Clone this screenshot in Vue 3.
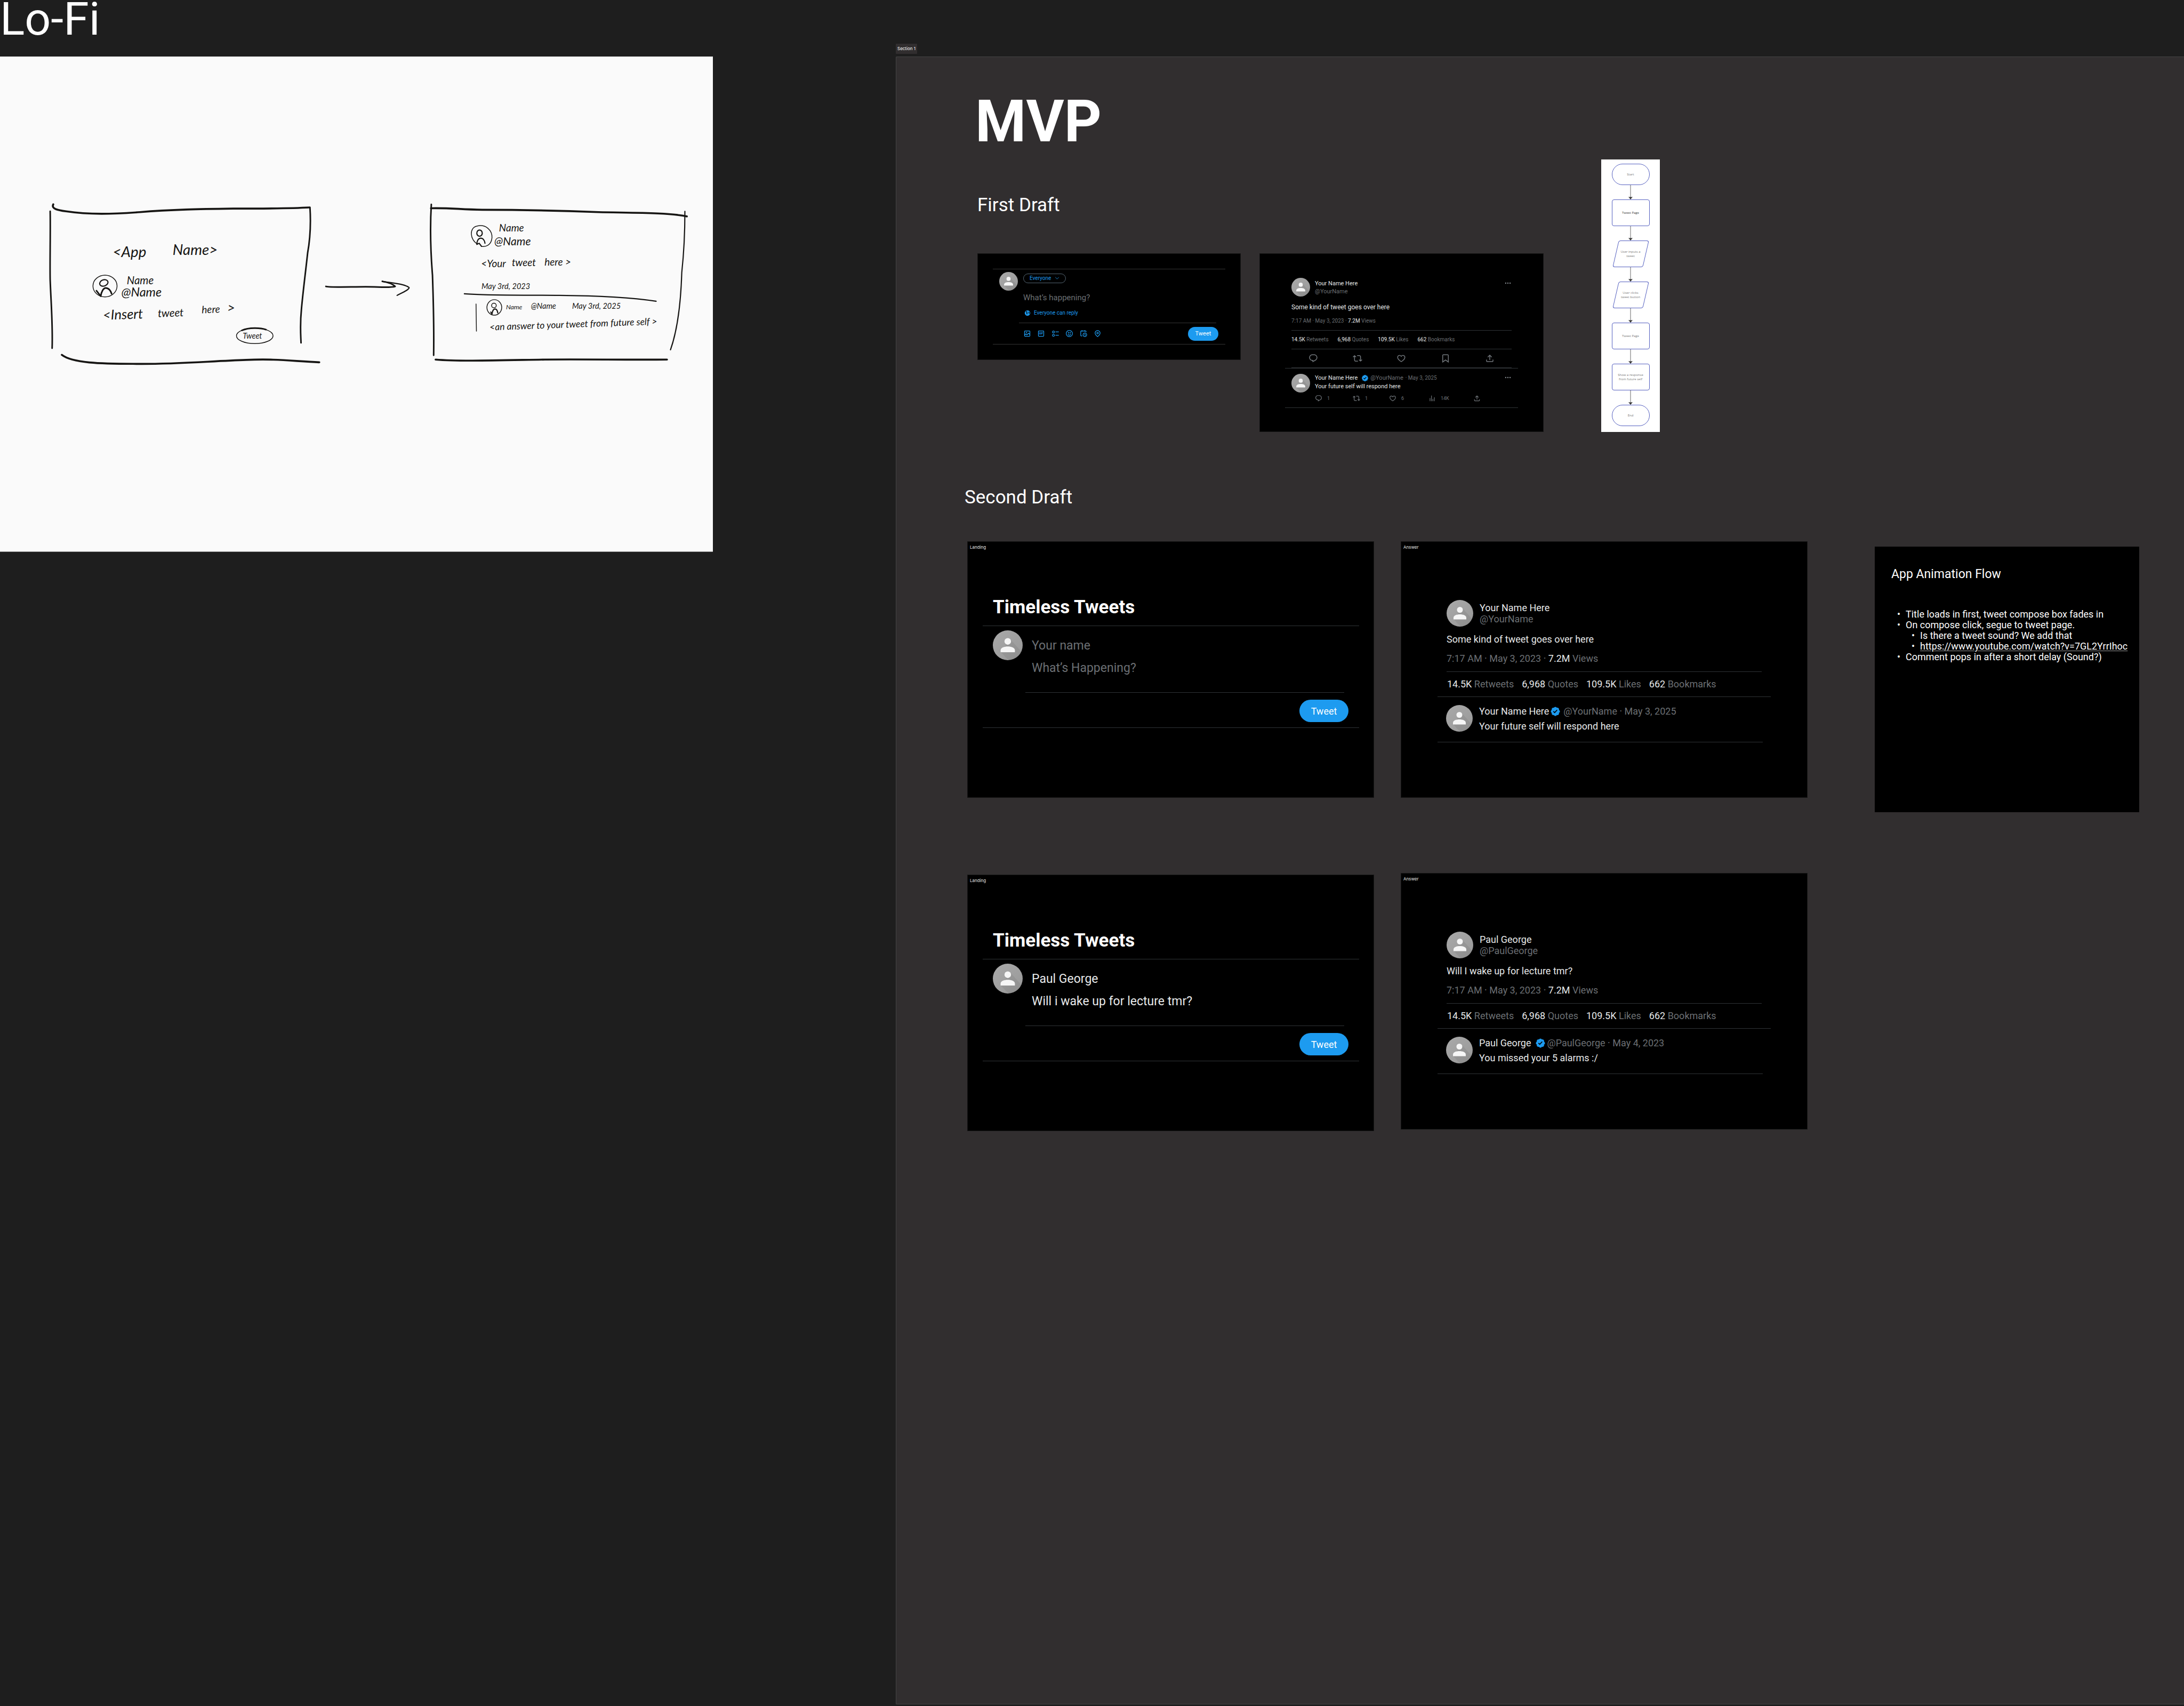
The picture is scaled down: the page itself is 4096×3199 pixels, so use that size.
<script setup>
const icons = {
  reply: 'M1.751 10c0-4.42 3.584-8 8.005-8h4.366c4.49 0 8.129 3.64 8.129 8.13 0 2.96-1.607 5.68-4.196 7.11l-8.054 4.46v-3.69h-.067c-4.49.1-8.183-3.51-8.183-8.01zm8.005-6c-3.317 0-6.005 2.69-6.005 6 0 3.37 2.77 6.08 6.138 6.01l.351-.01h1.761v2.3l5.087-2.81c1.951-1.08 3.163-3.13 3.163-5.36 0-3.39-2.744-6.13-6.129-6.13H9.756z',
  retweet: 'M4.5 3.88l4.432 4.14-1.364 1.46L5.5 7.55V16c0 1.1.896 2 2 2H13v2H7.5c-2.209 0-4-1.79-4-4V7.55L1.432 9.48.068 8.02 4.5 3.88zM16.5 6H11V4h5.5c2.209 0 4 1.79 4 4v8.45l2.068-1.93 1.364 1.46-4.432 4.14-4.432-4.14 1.364-1.46 2.068 1.93V8c0-1.1-.896-2-2-2z',
  like: 'M16.697 5.5c-1.222-.06-2.679.51-3.89 2.16l-.805 1.09-.806-1.09C9.984 6.01 8.526 5.44 7.304 5.5c-1.243.07-2.349.78-2.91 1.91-.552 1.12-.633 2.78.479 4.82 1.074 1.97 3.257 4.27 7.129 6.61 3.87-2.34 6.052-4.64 7.126-6.61 1.111-2.04 1.03-3.7.477-4.82-.561-1.13-1.666-1.84-2.908-1.91zm4.187 7.69c-1.351 2.48-4.001 5.12-8.379 7.67l-.503.3-.504-.3c-4.379-2.55-7.029-5.19-8.382-7.67-1.36-2.5-1.41-4.86-.514-6.67.887-1.79 2.647-2.91 4.601-3.01 1.651-.09 3.368.56 4.798 2.01 1.429-1.45 3.146-2.1 4.796-2.01 1.954.1 3.714 1.22 4.601 3.01.896 1.81.846 4.17-.514 6.67z',
  bookmark: 'M4 4.5C4 3.12 5.119 2 6.5 2h11C18.881 2 20 3.12 20 4.5v18.44l-8-5.71-8 5.71V4.5zM6.5 4c-.276 0-.5.22-.5.5v14.56l6-4.29 6 4.29V4.5c0-.28-.224-.5-.5-.5h-11z',
  share: 'M12 2.59l5.7 5.7-1.41 1.42L13 6.41V16h-2V6.41l-3.3 3.3-1.41-1.42L12 2.59zM21 15l-.02 3.51c0 1.38-1.12 2.49-2.5 2.49H5.5C4.11 21 3 19.88 3 18.5V15h2v3.5c0 .28.22.5.5.5h12.98c.28 0 .5-.22.5-.5L19 15h2z',
  views: 'M8.75 21V3h2v18h-2zM18 21V8.5h2V21h-2zM4 21l.004-10h2L6 21H4zm9.248 0v-7h2v7h-2z',
  more: 'M3 12c0-1.1.9-2 2-2s2 .9 2 2-.9 2-2 2-2-.9-2-2zm9 2c1.1 0 2-.9 2-2s-.9-2-2-2-2 .9-2 2 .9 2 2 2zm7 0c1.1 0 2-.9 2-2s-.9-2-2-2-2 .9-2 2 .9 2 2 2z',
  media: 'M3 5.5C3 4.119 4.119 3 5.5 3h13C19.881 3 21 4.119 21 5.5v13c0 1.381-1.119 2.5-2.5 2.5h-13C4.119 21 3 19.881 3 18.5v-13zM5.5 5c-.276 0-.5.224-.5.5v9.086l3-3 3 3 5-5 3 3V5.5c0-.276-.224-.5-.5-.5h-13zM19 15.414l-3-3-5 5-3-3-3 3V18.5c0 .276.224.5.5.5h13c.276 0 .5-.224.5-.5v-3.086zM9.75 7C8.784 7 8 7.784 8 8.75s.784 1.75 1.75 1.75 1.75-.784 1.75-1.75S10.716 7 9.75 7z',
  gif: 'M3 5.5C3 4.119 4.119 3 5.5 3h13C19.881 3 21 4.119 21 5.5v13c0 1.381-1.119 2.5-2.5 2.5h-13C4.119 21 3 19.881 3 18.5v-13zM5.5 5c-.276 0-.5.224-.5.5v13c0 .276.224.5.5.5h13c.276 0 .5-.224.5-.5v-13c0-.276-.224-.5-.5-.5h-13z',
  poll: 'M6 5c-1.1 0-2 .895-2 2s.9 2 2 2 2-.895 2-2-.9-2-2-2zM2 7c0-2.209 1.79-4 4-4s4 1.791 4 4-1.79 4-4 4-4-1.791-4-4zm20 1H12V6h10v2zM6 15c-1.1 0-2 .895-2 2s.9 2 2 2 2-.895 2-2-.9-2-2-2zm-4 2c0-2.209 1.79-4 4-4s4 1.791 4 4-1.79 4-4 4-4-1.791-4-4zm20 1H12v-2h10v2z',
  emoji: 'M8 9.5C8 8.119 8.672 7 9.5 7S11 8.119 11 9.5 10.328 12 9.5 12 8 10.881 8 9.5zm6.5 2.5c.828 0 1.5-1.119 1.5-2.5S15.328 7 14.5 7 13 8.119 13 9.5s.672 2.5 1.5 2.5zM12 16c-2.224 0-3.021-2.227-3.051-2.316l-1.897.633c.05.15 1.271 3.684 4.949 3.684s4.898-3.533 4.949-3.684l-1.896-.638c-.033.095-.83 2.322-3.053 2.322zm10.25-4.001c0 5.652-4.598 10.25-10.25 10.25S1.75 17.652 1.75 12 6.348 1.75 12 1.75 22.25 6.348 22.25 12zm-2 0c0-4.549-3.701-8.25-8.25-8.25S3.75 7.451 3.75 12s3.701 8.25 8.25 8.25 8.25-3.701 8.25-8.25z',
  schedule: 'M6 3V2h2v1h6V2h2v1h1.5C18.88 3 20 4.119 20 5.5v2h-2v-2c0-.276-.22-.5-.5-.5H16v1h-2V5H8v1H6V5H4.5c-.28 0-.5.224-.5.5v12c0 .276.22.5.5.5h3v2h-3C3.12 20 2 18.881 2 17.5v-12C2 4.119 3.12 3 4.5 3H6zm9.5 8c-2.49 0-4.5 2.015-4.5 4.5s2.01 4.5 4.5 4.5 4.5-2.015 4.5-4.5-2.01-4.5-4.5-4.5zM9 15.5C9 11.91 11.91 9 15.5 9s6.5 2.91 6.5 6.5-2.91 6.5-6.5 6.5S9 19.09 9 15.5zm5.5-2.5h2v2.086l1.71 1.707-1.42 1.414-2.29-2.293V13z',
  location: 'M12 7c-1.93 0-3.5 1.57-3.5 3.5S10.07 14 12 14s3.5-1.57 3.5-3.5S13.93 7 12 7zm0 5c-.827 0-1.5-.673-1.5-1.5S11.173 9 12 9s1.5.673 1.5 1.5S12.827 12 12 12zm0-10c-4.687 0-8.5 3.813-8.5 8.5 0 5.967 7.621 11.116 7.945 11.332l.555.37.555-.37c.324-.216 7.945-5.365 7.945-11.332C20.5 5.813 16.687 2 12 2zm0 17.77c-1.665-1.241-6.5-5.196-6.5-9.27C5.5 6.916 8.416 4 12 4s6.5 2.916 6.5 6.5c0 4.073-4.835 8.028-6.5 9.27z',
  globe: 'M12 1.75C6.34 1.75 1.75 6.34 1.75 12S6.34 22.25 12 22.25 22.25 17.66 22.25 12 17.66 1.75 12 1.75zm-.25 10.48L10.5 17.5l-2-1.5v-3.5L7.5 9 5.03 7.59c1.42-2.24 3.89-3.75 6.72-3.84L11 6l-2 .5L8.5 9l5 1.5-1.75 1.73zM17 14v-3l-1.5-3 2.88-1.23c1.17 1.42 1.87 3.24 1.87 5.23 0 1.3-.3 2.52-.83 3.61L17 14z',
  verified: 'M22.25 12c0-1.43-.88-2.67-2.19-3.34.46-1.39.2-2.9-.81-3.91s-2.52-1.27-3.91-.81c-.66-1.31-1.91-2.19-3.34-2.19s-2.67.88-3.33 2.19c-1.4-.46-2.91-.2-3.92.81s-1.26 2.52-.8 3.91c-1.31.67-2.2 1.91-2.2 3.34s.89 2.67 2.2 3.34c-.46 1.39-.21 2.9.8 3.91s2.52 1.26 3.91.81c.67 1.31 1.91 2.19 3.34 2.19s2.68-.88 3.34-2.19c1.39.45 2.9.2 3.91-.81s1.27-2.52.81-3.91c1.31-.67 2.19-1.91 2.19-3.34zm-11.71 4.2L6.8 12.46l1.41-1.42 2.26 2.26 4.8-5.23 1.47 1.36-6.2 6.77z'
}

const tools = [
  { icon: 'media', label: 'Media' },
  { icon: 'gif', label: 'GIF' },
  { icon: 'poll', label: 'Poll' },
  { icon: 'emoji', label: 'Emoji' },
  { icon: 'schedule', label: 'Schedule' },
  { icon: 'location', label: 'Location' }
]

const actions = [
  { icon: 'reply', label: 'Reply' },
  { icon: 'retweet', label: 'Retweet' },
  { icon: 'like', label: 'Like' },
  { icon: 'bookmark', label: 'Bookmark' },
  { icon: 'share', label: 'Share' }
]

const replyActions = [
  { icon: 'reply', label: 'Reply', count: '1' },
  { icon: 'retweet', label: 'Retweet', count: '1' },
  { icon: 'like', label: 'Like', count: '6' },
  { icon: 'views', label: 'Views', count: '14K' },
  { icon: 'share', label: 'Share', count: '' }
]

const stats = [
  { value: '14.5K', label: 'Retweets' },
  { value: '6,968', label: 'Quotes' },
  { value: '109.5K', label: 'Likes' },
  { value: '662', label: 'Bookmarks' }
]

const landings = [
  { id: 'empty', name: '', text: '' },
  { id: 'filled', name: 'Paul George', text: 'Will i wake up for lecture tmr?' }
]

const answers = [
  {
    id: 'empty',
    name: 'Your Name Here',
    handle: '@YourName',
    text: 'Some kind of tweet goes over here',
    replyDate: 'May 3, 2025',
    reply: 'Your future self will respond here'
  },
  {
    id: 'filled',
    name: 'Paul George',
    handle: '@PaulGeorge',
    text: 'Will I wake up for lecture tmr?',
    replyDate: 'May 4, 2023',
    reply: 'You missed your 5 alarms :/'
  }
]

const flow = [
  { shape: 'terminal', lines: ['Start'] },
  { shape: 'process', lines: ['Tweet Page'], strong: true },
  { shape: 'data', lines: ['User inputs a', 'tweet'] },
  { shape: 'data', lines: ['User clicks', 'tweet button'] },
  { shape: 'process', lines: ['Tweet Page'] },
  { shape: 'process', lines: ['Show a response', 'from future self'] },
  { shape: 'terminal', lines: ['End'] }
]
</script>

<template>
  <main class="canvas">
    <svg class="defs" aria-hidden="true">
      <defs>
        <linearGradient id="avatar-fill" x1="0" y1="0" x2="1" y2="1">
          <stop offset="0" stop-color="#a9a9a9" />
          <stop offset="1" stop-color="#989898" />
        </linearGradient>
        <clipPath id="avatar-clip"><circle cx="50" cy="50" r="50" /></clipPath>
        <symbol id="avatar" viewBox="0 0 100 100">
          <circle cx="50" cy="50" r="50" fill="url(#avatar-fill)" />
          <path d="M58 29 L100 76 V100 H52 L27 73 Z" fill="#000" opacity=".06" clip-path="url(#avatar-clip)" />
          <circle cx="50" cy="37" r="11" fill="#f6f6f6" />
          <path d="M26 73V67C26 58 38 54 50 54S74 58 74 67V73Z" fill="#f6f6f6" />
        </symbol>
      </defs>
    </svg>

    <section class="lofi">
      <h1 class="lofi-title">Lo-Fi</h1>
      <svg class="sketch" viewBox="0 0 1833 1273" role="img" aria-label="Hand-drawn wireframe">
        <rect width="1833" height="1273" fill="#fafafa" />
        <g class="ink">
          <path d="M137 380C131 392 150 395 170 398C230 407 290 405 360 400C440 393 520 392 600 391C680 391 740 391 796 388" stroke-width="5" />
          <path d="M129 398C130 450 128 530 129 575C131 630 136 690 134 750" stroke-width="4" />
          <path d="M797 388C799 420 799 460 791 505C785 560 779 605 775 650C771 690 773 710 774 736" stroke-width="4" />
          <path d="M159 767C185 788 260 790 342 790C440 792 540 783 633 780C710 776 760 784 821 786" stroke-width="5" />
          <ellipse cx="270" cy="590" rx="31" ry="28" stroke-width="2" />
          <ellipse cx="267" cy="582" rx="11" ry="8" stroke-width="3" transform="rotate(-20 267 582)" />
          <path d="M248 602L259 616C261 604 266 595 272 595C279 595 285 602 287 610" stroke-width="4" />
          <ellipse cx="655" cy="718" rx="47" ry="20" stroke-width="2" />
          <path d="M622 704C640 696 670 697 684 702" stroke-width="4" />
          <path d="M838 591C850 594 900 592 940 592C975 592 1005 595 1016 591C1008 583 996 580 983 578" stroke-width="4" />
          <path d="M983 578C1005 582 1040 584 1052 594C1052 600 1032 608 1021 614" stroke-width="3" />
          <path d="M1109 380C1106 430 1107 500 1112 562C1114 620 1116 700 1115 768" stroke-width="4" />
          <path d="M1108 390C1160 389 1180 393 1240 394C1340 394 1460 397 1539 400C1620 402 1720 401 1766 411" stroke-width="5" />
          <path d="M1761 398C1761 450 1759 500 1753 555C1751 620 1743 700 1724 754" stroke-width="3" />
          <path d="M1120 779C1180 784 1280 781 1401 779C1500 778 1620 780 1715 779" stroke-width="5" />
          <path d="M1228 482C1208 472 1206 440 1226 436C1250 430 1266 448 1265 466C1263 486 1248 490 1238 488" stroke-width="2" />
          <ellipse cx="1233" cy="454" rx="7" ry="8" stroke-width="3" />
          <path d="M1226 483C1226 474 1230 467 1236 467C1242 467 1246 473 1247 480M1226 483L1232 480L1238 488" stroke-width="3" />
          <path d="M1194 610C1250 615 1360 613 1438 614C1540 615 1620 619 1687 629" stroke-width="3" />
          <path d="M1224 636L1225 706" stroke-width="2" />
          <ellipse cx="1271" cy="645" rx="19" ry="20" stroke-width="2" />
          <ellipse cx="1270" cy="640" rx="6" ry="6" stroke-width="2" />
          <path d="M1262 657L1265 662C1266 655 1269 649 1273 649C1277 649 1279 654 1280 659" stroke-width="3" />
        </g>
        <g class="scrawl">
          <text x="290" y="516" font-size="38">&lt;App</text>
          <text x="444" y="510" font-size="38">Name&gt;</text>
          <text x="326" y="586" font-size="28">Name</text>
          <text x="312" y="617" font-size="32">@Name</text>
          <text x="265" y="677" font-size="35" transform="rotate(-2 265 677)">&lt;Insert</text>
          <text x="406" y="670" font-size="28" transform="rotate(-2 406 670)">tweet</text>
          <text x="519" y="660" font-size="26" transform="rotate(-2 519 660)">here</text>
          <text x="584" y="658" font-size="35">&gt;</text>
          <text x="624" y="725" font-size="20">Tweet</text>
          <text x="1283" y="449" font-size="26">Name</text>
          <text x="1271" y="485" font-size="29">@Name</text>
          <text x="1237" y="541" font-size="26">&lt;Your</text>
          <text x="1316" y="539" font-size="26">tweet</text>
          <text x="1400" y="538" font-size="26">here &gt;</text>
          <text x="1238" y="598" font-size="20">May 3rd, 2023</text>
          <text x="1301" y="650" font-size="17">Name</text>
          <text x="1365" y="648" font-size="20">@Name</text>
          <text x="1471" y="649" font-size="20">May 3rd, 2025</text>
          <text x="1259" y="704" font-size="24" transform="rotate(-2 1259 704)">&lt;an answer to your tweet from future self &gt;</text>
        </g>
      </svg>
    </section>

    <div class="board">
      <p class="section-tag">Section 1</p>
      <section class="section">
        <div class="first">
          <div class="first-main">
            <h1 class="mvp">MVP</h1>
            <h2 class="draft-title">First Draft</h2>
            <div class="first-frames">
              <article class="frame compose">
                <div class="compose-box">
                  <div class="compose-body">
                    <svg class="avatar-sm"><use href="#avatar" /></svg>
                    <div class="compose-fields">
                      <div class="audience">
                        <select aria-label="Audience"><option>Everyone</option></select>
                        <svg class="chevron" viewBox="0 0 10 6"><path d="M1 1L5 5L9 1" /></svg>
                      </div>
                      <input class="compose-input" type="text" aria-label="Tweet text" placeholder="What’s happening?" />
                      <p class="who">
                        <svg viewBox="0 0 24 24"><path :d="icons.globe" /></svg>
                        Everyone can reply
                      </p>
                    </div>
                  </div>
                  <div class="compose-tools">
                    <div class="tool-list">
                      <button v-for="t in tools" :key="t.icon" class="tool" type="button" :aria-label="t.label">
                        <svg viewBox="0 0 24 24">
                          <path :d="icons[t.icon]" />
                          <text v-if="t.icon === 'gif'" x="12" y="15" text-anchor="middle">GIF</text>
                        </svg>
                      </button>
                    </div>
                    <button class="tweet-btn tweet-btn-sm" type="button">Tweet</button>
                  </div>
                </div>
              </article>

              <article class="frame thread">
                <div class="thread-main">
                  <header class="author">
                    <svg class="avatar-sm"><use href="#avatar" /></svg>
                    <div class="names">
                      <p class="name">Your Name Here</p>
                      <p class="handle">@YourName</p>
                    </div>
                    <button class="more" type="button" aria-label="More"><svg viewBox="0 0 24 24"><path :d="icons.more" /></svg></button>
                  </header>
                  <p class="thread-text">Some kind of tweet goes over here</p>
                  <p class="thread-meta">7:17 AM · May 3, 2023 · <b>7.2M</b> Views</p>
                  <ul class="thread-stats">
                    <li v-for="s in stats" :key="s.label"><b>{{ s.value }}</b> {{ s.label }}</li>
                  </ul>
                  <div class="thread-actions">
                    <button v-for="a in actions" :key="a.icon" type="button" :aria-label="a.label">
                      <svg viewBox="0 0 24 24"><path :d="icons[a.icon]" /></svg>
                    </button>
                  </div>
                </div>
                <div class="thread-reply">
                  <svg class="avatar-sm"><use href="#avatar" /></svg>
                  <div class="reply-body">
                    <div class="reply-head">
                      <span class="name">Your Name Here</span>
                      <svg class="badge-sm" viewBox="0 0 24 24"><path :d="icons.verified" /></svg>
                      <span class="handle">@YourName</span>
                      <span class="date">· May 3, 2025</span>
                      <button class="more" type="button" aria-label="More"><svg viewBox="0 0 24 24"><path :d="icons.more" /></svg></button>
                    </div>
                    <p class="reply-text">Your future self will respond here</p>
                    <div class="reply-actions">
                      <button v-for="a in replyActions" :key="a.icon" type="button" :aria-label="a.label">
                        <svg viewBox="0 0 24 24"><path :d="icons[a.icon]" /></svg>
                        <span v-if="a.count">{{ a.count }}</span>
                      </button>
                    </div>
                  </div>
                </div>
              </article>
            </div>
          </div>

          <ol class="flow">
            <li v-for="(n, i) in flow" :key="i">
              <svg v-if="i > 0" class="arrow" viewBox="0 0 8 27"><path d="M4 0V24" stroke="#666" fill="none" /><path d="M0 22Q4 23 8 22L4 27Z" fill="#333" /></svg>
              <div class="node" :class="[n.shape, { strong: n.strong }]">
                <span v-for="line in n.lines" :key="line">{{ line }}</span>
              </div>
            </li>
          </ol>
        </div>

        <h2 class="draft-title second-title">Second Draft</h2>
        <div class="second">
          <div class="column">
            <article v-for="l in landings" :key="l.id" class="frame">
              <p class="frame-tag">Landing</p>
              <h3 class="landing-title">Timeless Tweets</h3>
              <form class="landing-box" @submit.prevent>
                <div class="landing-body">
                  <svg class="avatar-lg"><use href="#avatar" /></svg>
                  <div class="landing-fields">
                    <input type="text" aria-label="Your name" placeholder="Your name" :value="l.name" />
                    <input type="text" aria-label="Tweet text" placeholder="What’s Happening?" :value="l.text" />
                  </div>
                </div>
                <div class="landing-foot">
                  <button class="tweet-btn tweet-btn-lg" type="submit">Tweet</button>
                </div>
              </form>
            </article>
          </div>

          <div class="column column-answers">
            <article v-for="a in answers" :key="a.id" class="frame">
              <p class="frame-tag">Answer</p>
              <div class="answer-main">
                <header class="answer-author">
                  <svg class="avatar-md"><use href="#avatar" /></svg>
                  <div>
                    <p class="name">{{ a.name }}</p>
                    <p class="handle">{{ a.handle }}</p>
                  </div>
                </header>
                <p class="answer-text">{{ a.text }}</p>
                <p class="answer-meta">7:17 AM · May 3, 2023 · <b>7.2M</b> Views</p>
              </div>
              <ul class="answer-stats">
                <li v-for="s in stats" :key="s.label"><b>{{ s.value }}</b> {{ s.label }}</li>
              </ul>
              <div class="answer-reply">
                <svg class="avatar-md"><use href="#avatar" /></svg>
                <div>
                  <div class="answer-head" :class="a.id">
                    <span class="name">{{ a.name }}</span>
                    <svg class="badge" viewBox="0 0 24 24"><path :d="icons.verified" /></svg>
                    <span class="handle">{{ a.handle }} · {{ a.replyDate }}</span>
                  </div>
                  <p class="answer-text">{{ a.reply }}</p>
                </div>
              </div>
            </article>
          </div>

          <aside class="notes">
            <h3>App Animation Flow</h3>
            <ul>
              <li>Title loads in first, tweet compose box fades in</li>
              <li>
                On compose click, segue to tweet page.
                <ul>
                  <li>Is there a tweet sound? We add that</li>
                  <li><a href="https://www.youtube.com/watch?v=7GL2YrrIhoc">https://www.youtube.com/watch?v=7GL2YrrIhoc</a></li>
                </ul>
              </li>
              <li>Comment pops in after a short delay (Sound?)</li>
            </ul>
          </aside>
        </div>
      </section>
    </div>
  </main>
</template>

<style>
body {
  margin: 0;
  background: #1e1e1e;
}
</style>

<style scoped>
* {
  box-sizing: border-box;
}

h1,
h2,
h3,
p,
ul,
ol {
  margin: 0;
  padding: 0;
}

ul,
ol {
  list-style: none;
}

button,
input,
select {
  margin: 0;
  padding: 0;
  border: 0;
  background: none;
  color: inherit;
  font: inherit;
  outline: none;
}

svg {
  display: block;
  flex: none;
}

b {
  color: #e7e9ea;
  font-weight: 400;
}

.canvas {
  display: grid;
  grid-template-columns: 1337fr 2416fr;
  column-gap: 343px;
  min-height: 100vh;
  background: #1e1e1e;
  color: #fff;
  font-family: Roboto, "Liberation Sans", sans-serif;
}

.defs {
  position: absolute;
  width: 0;
  height: 0;
}

/* Lo-Fi sketch */
.lofi-title {
  padding-bottom: 34px;
  font-size: 86px;
  line-height: 72px;
  font-weight: 400;
}

.sketch {
  width: 100%;
  height: auto;
}

.ink {
  fill: none;
  stroke: #161513;
  stroke-linecap: round;
  stroke-linejoin: round;
}

.scrawl {
  fill: #161513;
  font-family: Lato, sans-serif;
  font-style: italic;
}

/* Board */
.board {
  display: flex;
  flex-direction: column;
  padding: 82px 0 3px;
}

.section-tag {
  align-self: flex-start;
  margin-bottom: 5px;
  padding: 0 3px;
  border-radius: 1px;
  background: #312e2f;
  font: 8px/19px Inter, sans-serif;
}

.section {
  flex: 1;
  padding-top: 57px;
  border: 1px solid #444;
  border-right: 0;
  border-radius: 2px 0 0 2px;
  background: #312e2f;
}

.first {
  display: flex;
  align-items: flex-end;
  gap: 108px;
  padding-left: 152px;
}

.mvp {
  margin-left: -4px;
  font-size: 109px;
  line-height: 128px;
  font-weight: 700;
}

.draft-title {
  margin-top: 72px;
  font-size: 35px;
  line-height: 42px;
  font-weight: 400;
}

.first-frames {
  display: flex;
  align-items: flex-start;
  gap: 35px;
  margin-top: 69px;
}

.frame {
  background: #000;
  box-shadow: inset 0 0 0 1px #161616;
}

.name {
  color: #e7e9ea;
}

.handle,
.date {
  color: #6b6f73;
}

.avatar-sm {
  width: 35px;
  height: 35px;
}

.avatar-md {
  width: 50px;
  height: 50px;
}

.avatar-lg {
  width: 56px;
  height: 56px;
}

.tweet-btn {
  background: #1d9bf0;
  color: #fff;
}

.tweet-btn-sm {
  width: 57px;
  height: 26px;
  border-radius: 13px;
  font-size: 11px;
}

.tweet-btn-lg {
  width: 92px;
  height: 42px;
  border-radius: 21px;
  font-size: 18px;
}

/* First draft: composer */
.compose {
  width: 494px;
  padding: 29px;
}

.compose-box {
  border-top: 1px solid #333;
  border-bottom: 1px solid #333;
}

.compose-body {
  display: flex;
  gap: 10px;
  padding: 5px 12px 11px;
}

.compose-fields {
  flex: 1;
}

.audience {
  display: inline-flex;
  align-items: center;
  gap: 6px;
  height: 18px;
  margin-top: 1px;
  padding: 0 11px;
  border: 1px solid #536471;
  border-radius: 9px;
  color: #1d9bf0;
  font-size: 10px;
}

.audience select {
  appearance: none;
}

.chevron {
  width: 9px;
  height: 5px;
  fill: none;
  stroke: #1d9bf0;
}

.compose-input {
  display: block;
  width: 100%;
  height: 20px;
  margin-top: 17px;
  font-size: 15px;
}

input::placeholder {
  color: #6b6f73;
  opacity: 1;
}

.who {
  display: flex;
  align-items: center;
  gap: 6px;
  margin-top: 12px;
  padding-left: 2px;
  color: #1d9bf0;
  font-size: 10px;
  line-height: 14px;
}

.who svg {
  width: 12px;
  height: 12px;
  fill: #1d9bf0;
}

.compose-tools {
  position: relative;
  display: flex;
  align-items: center;
  justify-content: space-between;
  margin: 0 13px 0 49px;
  padding: 8px 0 6px 8px;
}

.compose-tools::before {
  content: "";
  position: absolute;
  inset: 0 4px auto 0;
  border-top: 1px solid #333;
}

.tool-list {
  display: flex;
  justify-content: space-between;
  width: 147px;
}

.tool svg {
  width: 15px;
  height: 15px;
  fill: #1d9bf0;
}

.tool text {
  font-size: 8px;
  font-weight: 700;
}

/* First draft: tweet page */
.thread {
  width: 533px;
  padding: 46px 48px 45px;
  font-size: 11px;
}

.thread-main {
  margin: 0 12px;
  border-bottom: 1px solid #2f3336;
}

.author {
  display: flex;
  align-items: center;
  gap: 9px;
}

.names {
  flex: 1;
  line-height: 15px;
}

.more {
  align-self: flex-start;
  margin-top: 3px;
}

.more svg {
  width: 14px;
  height: 14px;
  fill: #8b9095;
}

.thread-text {
  margin-top: 11px;
  color: #e7e9ea;
  font-size: 12px;
  line-height: 18px;
}

.thread-meta {
  padding: 10px 0;
  color: #6b6f73;
  font-size: 10px;
  line-height: 14px;
}

.thread-stats {
  display: flex;
  gap: 17px;
  padding: 10px 0;
  border: solid #2f3336;
  border-width: 1px 0;
  color: #6b6f73;
  font-size: 10px;
  line-height: 14px;
}

.thread-actions {
  display: grid;
  grid-template-columns: repeat(5, 1fr);
  justify-items: center;
  padding: 8px 0;
}

.thread-actions svg {
  width: 18px;
  height: 18px;
  fill: #71767b;
}

.thread-reply {
  display: flex;
  gap: 9px;
  padding: 10px 12px;
  border: solid #2f3336;
  border-width: 1px 0;
}

.reply-body {
  flex: 1;
  line-height: 16px;
}

.reply-head {
  display: flex;
  align-items: center;
}

.badge-sm {
  width: 14px;
  height: 14px;
  margin: 0 3px 0 7px;
  fill: #1d9bf0;
}

.date {
  margin-left: 4px;
  font-size: 10px;
}

.reply-head .more {
  margin: 0 0 0 auto;
}

.reply-text {
  color: #e7e9ea;
}

.reply-actions {
  display: grid;
  grid-template-columns: 71px 68px 74px 84px 1fr;
  margin-top: 7px;
}

.reply-actions button {
  display: flex;
  align-items: center;
  gap: 9px;
  color: #71767b;
  font-size: 9px;
  line-height: 14px;
}

.reply-actions svg {
  width: 14px;
  height: 14px;
  fill: #71767b;
}

/* User flow chart */
.flow {
  width: 110px;
  padding: 8px 0 11px;
  background: #fff;
  font-family: "Open Sans", sans-serif;
}

.flow li {
  display: flex;
  flex-direction: column;
  align-items: center;
}

.arrow {
  width: 8px;
  height: 27px;
}

.node {
  position: relative;
  display: flex;
  flex-direction: column;
  align-items: center;
  justify-content: center;
  width: 71px;
  height: 50px;
  border: 1px solid #5560c0;
  border-radius: 4px;
  color: #777;
  font-size: 6px;
  line-height: 8px;
}

.node.strong {
  color: #333;
}

.node.terminal {
  height: 40px;
  border-radius: 20px;
}

.node.data {
  border: 0;
}

.node.data::before {
  content: "";
  position: absolute;
  inset: 0 7px;
  border: 1px solid #5560c0;
  border-radius: 4px;
  transform: skewX(-13deg);
}

/* Second draft */
.second-title {
  margin-top: 102px;
  padding-left: 128px;
}

.second {
  display: grid;
  grid-template-columns: 763fr 763fr 572fr;
  column-gap: 50px;
  align-items: start;
  margin-top: 61px;
  padding: 0 84px 0 133px;
}

.column {
  display: flex;
  flex-direction: column;
  gap: 144px;
}

.column-answers {
  gap: 141px;
}

.column .frame {
  height: 481px;
  padding-top: 5px;
}

.frame-tag {
  padding-left: 5px;
  color: #e0e0e0;
  font: 8px/12px Inter, sans-serif;
}

.landing-title {
  margin: 86px 0 13px 48px;
  font-size: 35px;
  line-height: 42px;
  font-weight: 700;
}

.landing-box {
  margin: 0 28px 0 29px;
  border: solid #2f3336;
  border-width: 1px 0;
}

.landing-body {
  display: flex;
  gap: 17px;
  padding: 8px 19px 30px;
}

.landing-fields {
  display: flex;
  flex: 1;
  flex-direction: column;
  gap: 10px;
  margin-top: 12px;
}

.landing-fields input {
  height: 32px;
  color: #e7e9ea;
  font-size: 23px;
}

.landing-foot {
  position: relative;
  display: flex;
  justify-content: flex-end;
  margin: 0 20px 0 80px;
  padding: 14px 0 10px;
}

.landing-foot::before {
  content: "";
  position: absolute;
  inset: 0 8px auto 0;
  border-top: 1px solid #2f3336;
}

.answer-main {
  margin: 93px 86px 0;
  padding-bottom: 12px;
  border-bottom: 1px solid #2f3336;
}

.answer-author {
  display: flex;
  align-items: center;
  gap: 12px;
  font-size: 18px;
  line-height: 21px;
}

.answer-text {
  margin-top: 12px;
  color: #e7e9ea;
  font-size: 18px;
  line-height: 24px;
}

.answer-meta {
  margin-top: 12px;
  color: #6b6f73;
  font-size: 18px;
  line-height: 24px;
}

.answer-stats {
  display: flex;
  gap: 15px;
  margin: 0 69px;
  padding: 11px 18px;
  border-bottom: 1px solid #2f3336;
  color: #6b6f73;
  font-size: 18px;
  line-height: 24px;
}

.answer-reply {
  display: flex;
  gap: 12px;
  margin: 0 84px 0 69px;
  padding: 15px 16px 17px;
  border-bottom: 1px solid #2f3336;
}

.answer-head {
  display: flex;
  align-items: center;
  font-size: 18px;
  line-height: 24px;
}

.answer-head .badge {
  margin: 0 5px 0 2px;
}

.answer-head.filled .badge {
  margin: 0 2px 0 8px;
}

.badge {
  width: 20px;
  height: 20px;
  fill: #1d9bf0;
}

.answer-reply .answer-text {
  margin-top: 4px;
}

/* Notes */
.notes {
  min-height: 498px;
  margin: 10px 0 0 76px;
  padding: 38px 0 0 31px;
  background: #000;
}

.notes h3 {
  margin-bottom: 51px;
  font-size: 23px;
  line-height: 28px;
  font-weight: 400;
}

.notes ul {
  padding-left: 27px;
  font-size: 18px;
  line-height: 20px;
}

.notes li {
  position: relative;
  white-space: nowrap;
}

.notes li::before {
  content: "•";
  position: absolute;
  left: -16px;
}

.notes a {
  color: inherit;
  text-decoration-color: #9a9a9a;
  text-underline-offset: 2px;
}
</style>
